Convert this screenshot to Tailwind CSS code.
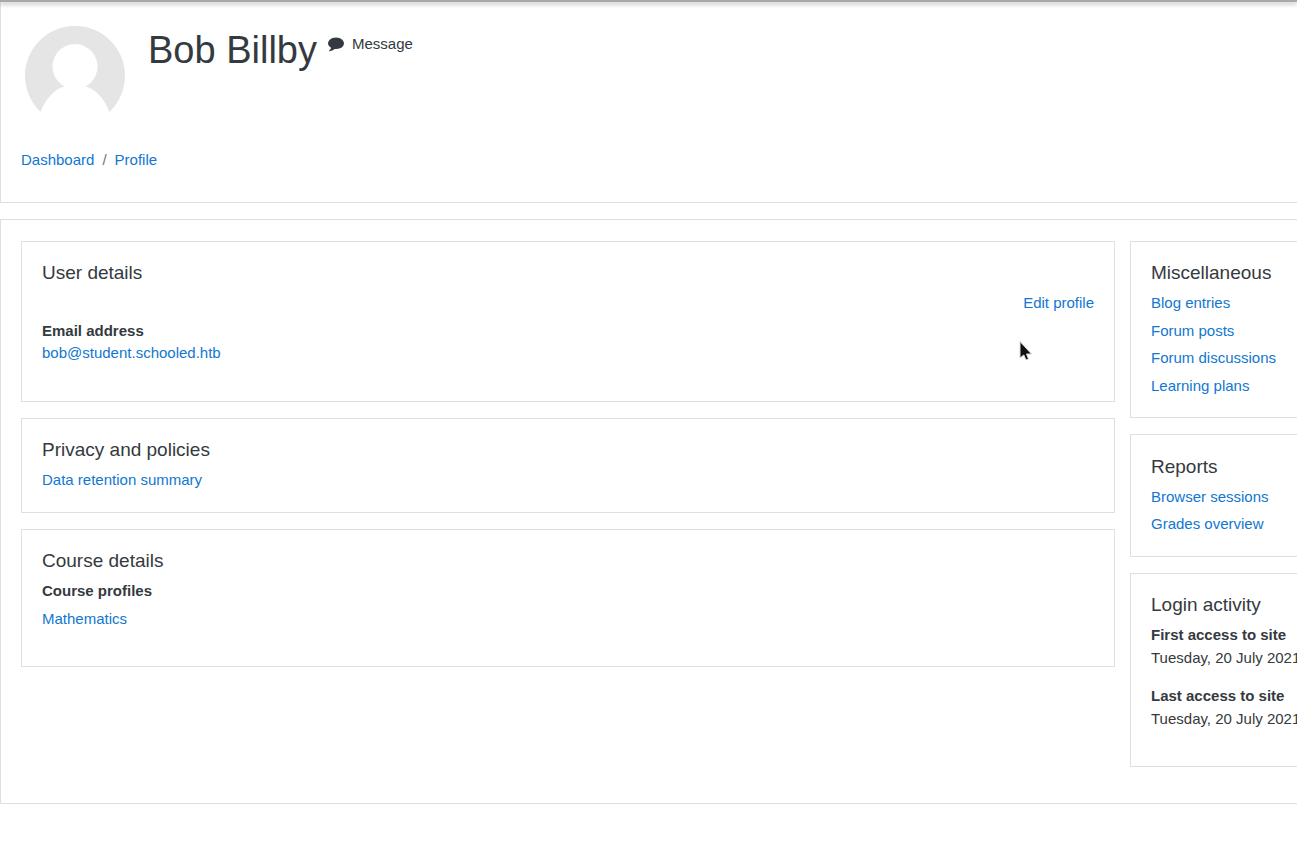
<!DOCTYPE html>
<html lang="en">
<head>
<meta charset="utf-8">
<title>Bob Billby: Public profile</title>
<script src="https://cdn.jsdelivr.net/npm/@tailwindcss/browser@4"></script>
</head>
<body class="bg-white font-['Liberation_Sans',Arial,sans-serif] text-[15px] leading-[22px] text-[#343a40]">
<div class="relative overflow-hidden">
  <div class="absolute inset-x-0 top-0 h-[2px] bg-[#a8a8a8] shadow-[0_2px_4px_rgba(0,0,0,0.35)]"></div>

  <header class="border-b border-l border-[#dfdfdf] px-5 pt-[26px] pb-[31px]">
    <div class="flex items-start">
      <svg class="ml-1 size-[100px] shrink-0" viewBox="0 0 100 100" role="img" aria-label="Picture of Bob Billby">
        <path fill="#e5e5e5" d="M15.500 86 A50 50 0 1 1 84.500 86 C80 74 71 63 60.500 60.500 A22.500 22.500 0 1 0 39.500 60.500 C29 63 20 74 15.500 86Z"/>
      </svg>
      <h1 class="ml-[23px] text-[38px] leading-[48px]">Bob Billby</h1>
      <button type="button" class="mt-[7px] ml-[11px] flex items-center gap-2">
        <svg class="size-4" viewBox="0 80 1792 1792" fill="currentColor" aria-hidden="true"><path d="M1792 896q0 174-120 321.500t-326 233-450 85.500q-70 0-145-8-198 175-460 242-49 14-114 22-17 2-30.500-9t-17.500-29v-1q-3-4-.5-12t2-10 4.500-9.500l6-9 7-8.500 8-9q7-8 31-34.500t34.500-38 31-39.500 32.500-51 27-59 26-76q-157-89-247.500-220t-90.500-281q0-174 120-321.500t326-233 450-85.500 450 85.500 326 233 120 321.500z"/></svg>
        <span>Message</span>
      </button>
    </div>
    <nav aria-label="Breadcrumb" class="mt-[23px]">
      <ol class="flex gap-2">
        <li><a href="#" class="text-[#1177d1]">Dashboard</a></li>
        <li aria-hidden="true" class="text-[#6c757d]">/</li>
        <li><a href="#" class="text-[#1177d1]">Profile</a></li>
      </ol>
    </nav>
  </header>

  <main class="mt-4 flex items-start gap-[15px] border-y border-l border-[#dfdfdf] pt-[21px] pb-9 pl-5">
    <div class="flex min-w-0 flex-1 flex-col gap-4">
      <section class="border border-[#dfdfdf] px-5 pt-5 pb-[37px]">
        <h2 class="mb-2 text-[19px] leading-[22px]">User details</h2>
        <p class="h-7 text-right"><a href="#" class="text-[#1177d1]">Edit profile</a></p>
        <dl>
          <dt class="font-bold">Email address</dt>
          <dd><a href="#" class="text-[#1177d1]">bob@student.schooled.htb</a></dd>
        </dl>
      </section>
      <section class="border border-[#dfdfdf] px-5 pt-5 pb-[15px]">
        <h2 class="mb-2 text-[19px] leading-[22px]">Privacy and policies</h2>
        <p class="h-7"><a href="#" class="text-[#1177d1]">Data retention summary</a></p>
      </section>
      <section class="border border-[#dfdfdf] px-5 pt-5 pb-[31px]">
        <h2 class="mb-2 text-[19px] leading-[22px]">Course details</h2>
        <dl>
          <dt class="h-7 font-bold">Course profiles</dt>
          <dd class="h-[27px]"><a href="#" class="text-[#1177d1]">Mathematics</a></dd>
        </dl>
      </section>
    </div>

    <aside class="flex w-[167px] shrink-0 flex-col gap-4 whitespace-nowrap">
      <section class="border-y border-l border-[#dfdfdf] pt-5 pb-[15px] pl-5">
        <h2 class="mb-2 text-[19px] leading-[22px]">Miscellaneous</h2>
        <ul>
          <li class="h-7"><a href="#" class="text-[#1177d1]">Blog entries</a></li>
          <li class="h-[27px]"><a href="#" class="text-[#1177d1]">Forum posts</a></li>
          <li class="h-7"><a href="#" class="text-[#1177d1]">Forum discussions</a></li>
          <li class="h-[27px]"><a href="#" class="text-[#1177d1]">Learning plans</a></li>
        </ul>
      </section>
      <section class="border-y border-l border-[#dfdfdf] pt-[21px] pb-[15px] pl-5">
        <h2 class="mb-2 text-[19px] leading-[22px]">Reports</h2>
        <ul>
          <li class="h-[27px]"><a href="#" class="text-[#1177d1]">Browser sessions</a></li>
          <li class="h-7"><a href="#" class="text-[#1177d1]">Grades overview</a></li>
        </ul>
      </section>
      <section class="border-y border-l border-[#dfdfdf] pt-5 pb-9 pl-5">
        <h2 class="mb-[7px] text-[19px] leading-[22px]">Login activity</h2>
        <dl class="leading-[23px]">
          <dt class="font-bold">First access to site</dt>
          <dd class="mb-[15px]">Tuesday, 20 July 2021</dd>
          <dt class="font-bold">Last access to site</dt>
          <dd>Tuesday, 20 July 2021</dd>
        </dl>
      </section>
    </aside>
  </main>

  <svg class="pointer-events-none absolute top-[340px] right-[264px] h-[22px] w-[14px]" viewBox="0 0 14 22" aria-hidden="true">
    <path d="M1 1.500V18L4.800 15L7 20L9.500 19L7.500 14H12.500Z" fill="#111" stroke="#ddd" stroke-width="1"/>
  </svg>
</div>
</body>
</html>
